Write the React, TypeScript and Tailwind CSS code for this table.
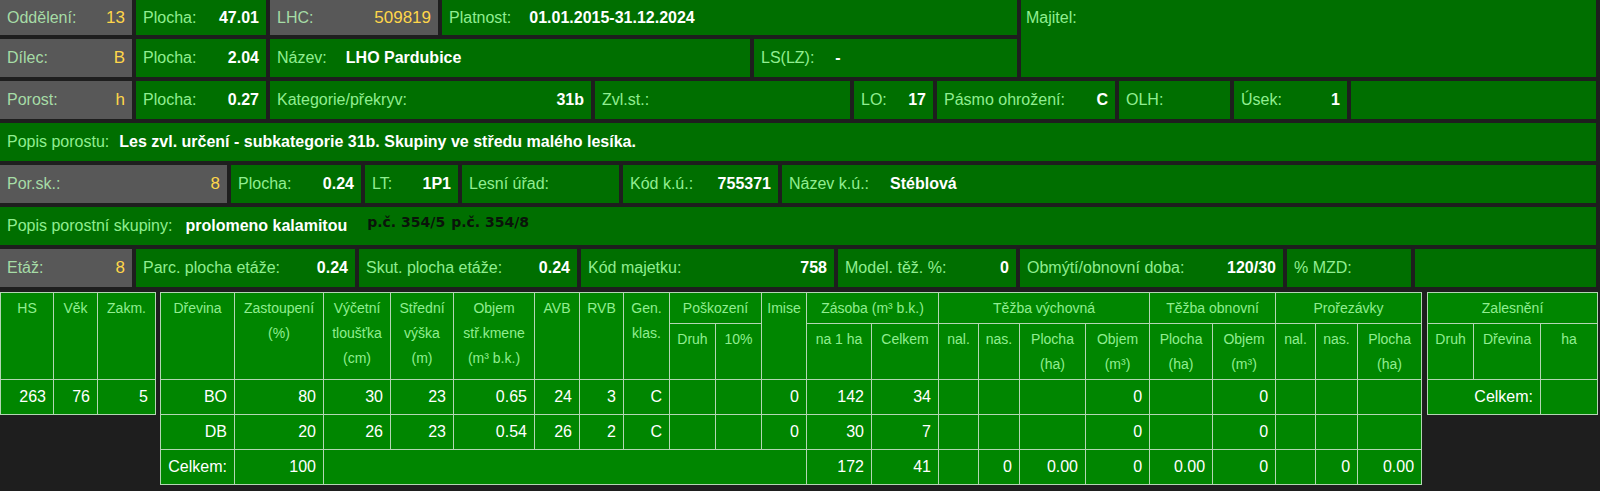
import React from "react";

type CellProps = {
  label: string;
  value?: string;
  w?: string;
  gray?: boolean;
  gap?: string;
};

// one labelled box of the header form
function Cell({ label, value, w = "flex-1 min-w-0", gray, gap }: CellProps) {
  return (
    <div
      className={`${w} h-full flex items-center px-[7px] whitespace-nowrap ${
        gray ? "bg-[#585858]" : "bg-[#006f00]"
      }`}
    >
      <span className={gray ? "text-[#a6dca6]" : "text-[#90ee90]"}>{label}</span>
      {value !== undefined &&
        (gap ? (
          <span className={`${gap} font-bold text-white`}>{value}</span>
        ) : (
          <span className={`ml-auto ${gray ? "text-[#ffd64a] text-[17px]" : "font-bold text-white"}`}>{value}</span>
        ))}
    </div>
  );
}

const th =
  "border border-[#b3d6b3] font-normal text-[14px] leading-[25px] text-[#90ee90] text-center align-top pt-[3px] px-0";
const td = "border border-[#b3d6b3] text-right pr-[7px] text-white text-[16px] whitespace-nowrap";

const rows = [
  ["BO", "80", "30", "23", "0.65", "24", "3", "C", "", "", "0", "142", "34", "", "", "", "0", "", "0", "", "", ""],
  ["DB", "20", "26", "23", "0.54", "26", "2", "C", "", "", "0", "30", "7", "", "", "", "0", "", "0", "", "", ""],
];

const widths = [
  "w-[74px]", "w-[89px]", "w-[67px]", "w-[63px]", "w-[81px]", "w-[45px]", "w-[44px]", "w-[46px]",
  "w-[46px]", "w-[46px]", "w-[45px]", "w-[65px]", "w-[67px]", "w-[40px]", "w-[41px]", "w-[66px]",
  "w-[64px]", "w-[63px]", "w-[63px]", "w-[40px]", "w-[42px]", "w-[64px]",
];

export default function App() {
  return (
    <div className="w-[1600px] h-[491px] bg-[#1e1e1e] overflow-hidden font-['Liberation_Sans',Arial,sans-serif] text-[16px]">
      <div className="w-[1596px] flex flex-col gap-[4px]">
        <div className="flex gap-[4px] h-[77px]">
          <div className="w-[1017px] shrink-0 flex flex-col gap-[4px]">
            <div className="flex gap-[4px] h-[35px]">
              <Cell label="Oddělení:" value="13" gray w="w-[132px] shrink-0" />
              <Cell label="Plocha:" value="47.01" w="w-[130px] shrink-0" />
              <Cell label="LHC:" value="509819" gray w="w-[168px] shrink-0" />
              <Cell label="Platnost:" value="01.01.2015-31.12.2024" gap="ml-[18px]" />
            </div>
            <div className="flex gap-[4px] h-[38px]">
              <Cell label="Dílec:" value="B" gray w="w-[132px] shrink-0" />
              <Cell label="Plocha:" value="2.04" w="w-[130px] shrink-0" />
              <Cell label="Název:" value="LHO Pardubice" gap="ml-[19px]" w="w-[480px] shrink-0" />
              <Cell label="LS(LZ):" value="-" gap="ml-[21px]" />
            </div>
          </div>
          <div className="flex-1 bg-[#006f00] px-[5px]">
            <div className="h-[35px] flex items-center text-[#90ee90]">Majitel:</div>
          </div>
        </div>

        <div className="flex gap-[4px] h-[38px]">
          <Cell label="Porost:" value="h" gray w="w-[132px] shrink-0" />
          <Cell label="Plocha:" value="0.27" w="w-[130px] shrink-0" />
          <Cell label="Kategorie/překryv:" value="31b" w="w-[321px] shrink-0" />
          <Cell label="Zvl.st.:" w="w-[255px] shrink-0" />
          <Cell label="LO:" value="17" w="w-[79px] shrink-0" />
          <Cell label="Pásmo ohrožení:" value="C" w="w-[178px] shrink-0" />
          <Cell label="OLH:" w="w-[111px] shrink-0" />
          <Cell label="Úsek:" value="1" w="w-[113px] shrink-0" />
          <div className="flex-1 bg-[#006f00]" />
        </div>

        <div className="h-[38px] bg-[#006f00] flex items-center px-[7px] whitespace-nowrap">
          <span className="text-[#90ee90]">Popis porostu:</span>
          <span className="ml-[10px] font-bold text-white">
            Les zvl. určení - subkategorie 31b. Skupiny ve středu malého lesíka.
          </span>
        </div>

        <div className="flex gap-[4px] h-[38px]">
          <Cell label="Por.sk.:" value="8" gray w="w-[227px] shrink-0" />
          <Cell label="Plocha:" value="0.24" w="w-[130px] shrink-0" />
          <Cell label="LT:" value="1P1" w="w-[93px] shrink-0" />
          <Cell label="Lesní úřad:" w="w-[157px] shrink-0" />
          <Cell label="Kód k.ú.:" value="755371" w="w-[155px] shrink-0" />
          <Cell label="Název k.ú.:" value="Stéblová" gap="ml-[21px]" />
        </div>

        <div className="h-[38px] bg-[#006f00] flex items-center px-[7px] whitespace-nowrap">
          <span className="text-[#90ee90]">Popis porostní skupiny:</span>
          <span className="ml-[13px] font-bold text-white">prolomeno kalamitou</span>
          <span className="ml-[20px] mb-[7px] font-['DejaVu_Sans',sans-serif] font-bold text-[14px] text-[#0a140a]">
            p.č. 354/5
          </span>
          <span className="ml-[6px] mb-[7px] font-['DejaVu_Sans',sans-serif] font-bold text-[14px] text-[#0a140a]">
            p.č. 354/8
          </span>
        </div>

        <div className="flex gap-[4px] h-[38px]">
          <Cell label="Etáž:" value="8" gray w="w-[132px] shrink-0" />
          <Cell label="Parc. plocha etáže:" value="0.24" w="w-[219px] shrink-0" />
          <Cell label="Skut. plocha etáže:" value="0.24" w="w-[218px] shrink-0" />
          <Cell label="Kód majetku:" value="758" w="w-[253px] shrink-0" />
          <Cell label="Model. těž. %:" value="0" w="w-[178px] shrink-0" />
          <Cell label="Obmýtí/obnovní doba:" value="120/30" w="w-[263px] shrink-0" />
          <Cell label="% MZD:" w="w-[124px] shrink-0" />
          <div className="flex-1 bg-[#006f00]" />
        </div>
      </div>

      <div className="flex items-start mt-[5px]">
        <table className="w-[155px] table-fixed border-collapse bg-[#008600]">
          <colgroup>
            <col className="w-[53px]" />
            <col className="w-[44px]" />
            <col className="w-[58px]" />
          </colgroup>
          <thead>
            <tr className="h-[87px]">
              <th className={th}>HS</th>
              <th className={th}>Věk</th>
              <th className={th}>Zakm.</th>
            </tr>
          </thead>
          <tbody>
            <tr className="h-[35px]">
              <td className={td}>263</td>
              <td className={td}>76</td>
              <td className={td}>5</td>
            </tr>
          </tbody>
        </table>

        <table className="ml-[4px] w-[1261px] table-fixed border-collapse bg-[#008600]">
          <colgroup>
            {widths.map((w, i) => (
              <col key={i} className={w} />
            ))}
          </colgroup>
          <thead>
            <tr className="h-[31px]">
              <th rowSpan={2} className={th}>Dřevina</th>
              <th rowSpan={2} className={th}>Zastoupení<br />(%)</th>
              <th rowSpan={2} className={th}>Výčetní<br />tloušťka<br />(cm)</th>
              <th rowSpan={2} className={th}>Střední<br />výška<br />(m)</th>
              <th rowSpan={2} className={th}>Objem<br />stř.kmene<br />(m³ b.k.)</th>
              <th rowSpan={2} className={th}>AVB</th>
              <th rowSpan={2} className={th}>RVB</th>
              <th rowSpan={2} className={th}>Gen.<br />klas.</th>
              <th colSpan={2} className={th}>Poškození</th>
              <th rowSpan={2} className={th}>Imise</th>
              <th colSpan={2} className={th}>Zásoba (m³ b.k.)</th>
              <th colSpan={4} className={th}>Těžba výchovná</th>
              <th colSpan={2} className={th}>Těžba obnovní</th>
              <th colSpan={3} className={th}>Prořezávky</th>
            </tr>
            <tr className="h-[56px]">
              <th className={th}>Druh</th>
              <th className={th}>10%</th>
              <th className={th}>na 1 ha</th>
              <th className={th}>Celkem</th>
              <th className={th}>nal.</th>
              <th className={th}>nas.</th>
              <th className={th}>Plocha<br />(ha)</th>
              <th className={th}>Objem<br />(m³)</th>
              <th className={th}>Plocha<br />(ha)</th>
              <th className={th}>Objem<br />(m³)</th>
              <th className={th}>nal.</th>
              <th className={th}>nas.</th>
              <th className={th}>Plocha<br />(ha)</th>
            </tr>
          </thead>
          <tbody>
            {rows.map((r, i) => (
              <tr key={i} className="h-[35px]">
                {r.map((v, j) => (
                  <td key={j} className={td}>{v}</td>
                ))}
              </tr>
            ))}
            <tr className="h-[35px]">
              <td className={td}>Celkem:</td>
              <td className={td}>100</td>
              <td colSpan={9} className={td}></td>
              <td className={td}>172</td>
              <td className={td}>41</td>
              <td className={td}></td>
              <td className={td}>0</td>
              <td className={td}>0.00</td>
              <td className={td}>0</td>
              <td className={td}>0.00</td>
              <td className={td}>0</td>
              <td className={td}></td>
              <td className={td}>0</td>
              <td className={td}>0.00</td>
            </tr>
          </tbody>
        </table>

        <table className="ml-[5px] w-[170px] table-fixed border-collapse bg-[#008600]">
          <colgroup>
            <col className="w-[46px]" />
            <col className="w-[67px]" />
            <col className="w-[57px]" />
          </colgroup>
          <thead>
            <tr className="h-[31px]">
              <th colSpan={3} className={th}>Zalesnění</th>
            </tr>
            <tr className="h-[56px]">
              <th className={th}>Druh</th>
              <th className={th}>Dřevina</th>
              <th className={th}>ha</th>
            </tr>
          </thead>
          <tbody>
            <tr className="h-[35px]">
              <td colSpan={2} className={td}>Celkem:</td>
              <td className={td}></td>
            </tr>
          </tbody>
        </table>
      </div>
    </div>
  );
}
